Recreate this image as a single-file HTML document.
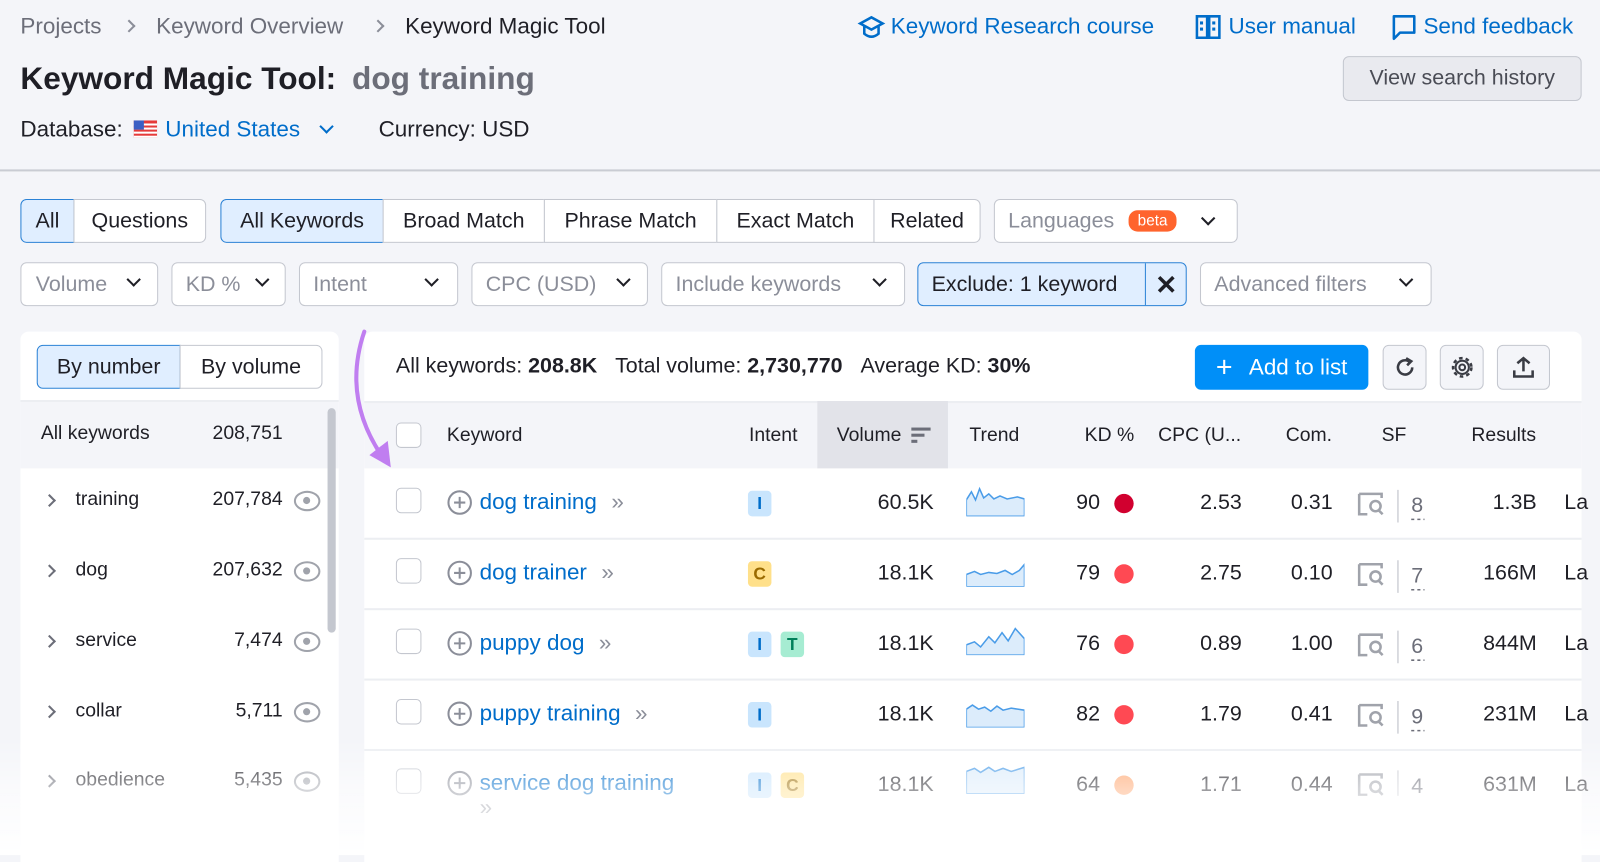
<!DOCTYPE html>
<html><head><meta charset="utf-8"><style>
*{box-sizing:border-box;margin:0;padding:0}
body{width:1600px;height:838px;overflow:hidden;background:#f4f5f9;font-family:"Liberation Sans",sans-serif;font-size:21px;color:#1f1f26;position:relative}
#w{position:absolute;left:0;top:0;width:1568px;height:822px;transform:scale(1.0204);transform-origin:0 0}
.a{position:absolute;white-space:nowrap}
.c{position:absolute;display:flex;align-items:center;justify-content:center;white-space:nowrap}
.gray{color:#6c6e79}
.blue{color:#006dca}
.btn{position:absolute;border:1px solid #c4c7cf;background:#fff;display:flex;align-items:center;white-space:nowrap}
.sel{background:#e0eeff;border-color:#2b82d6}
.chev{display:inline-block;width:10px;height:10px;border-right:2.5px solid #1f1f26;border-bottom:2.5px solid #1f1f26;transform:rotate(45deg);margin-top:-6px}
.rc{position:absolute;width:9px;height:9px;border-right:2px solid #8b8e99;border-top:2px solid #8b8e99;transform:rotate(45deg)}
.cb{position:absolute;width:25px;height:25px;border:1.5px solid #c4c7cf;border-radius:5px;background:#fff}
.tag{position:absolute;width:23px;height:25px;border-radius:4px;display:flex;align-items:center;justify-content:center;font-size:17px;font-weight:bold}
.tI{background:#c9e5fd;color:#006dca}
.tC{background:#ffe08a;color:#9a6a00}
.tT{background:#a6ecd2;color:#00805a}
.r{position:absolute;text-align:right;white-space:nowrap}
.dot{position:absolute;width:19px;height:19px;border-radius:50%}
.eye{position:absolute;width:26px;height:20px;border:2.5px solid #a0a3ab;border-radius:50%}
.eye:after{content:"";position:absolute;left:7px;top:4px;width:7px;height:7px;border-radius:50%;background:#a0a3ab}
</style></head><body><div id="w">
<!-- header -->
<div class="a gray" style="left:20px;top:13px;font-size:22px">Projects</div>
<div class="rc" style="left:122px;top:21px"></div>
<div class="a gray" style="left:153px;top:13px;font-size:22px">Keyword Overview</div>
<div class="rc" style="left:366px;top:21px"></div>
<div class="a" style="left:397px;top:13px;font-size:22px">Keyword Magic Tool</div>

<svg class="a" style="left:840px;top:14px" width="28" height="26" viewBox="0 0 28 26"><path d="M3 9 L14 3 L25 9 L14 15 Z" fill="none" stroke="#006dca" stroke-width="2.5"/><path d="M7 12 V19 Q14 25 21 19 V12" fill="none" stroke="#006dca" stroke-width="2.5"/></svg>
<div class="a blue" style="left:873px;top:13px;font-size:22px">Keyword Research course</div>
<svg class="a" style="left:1171px;top:13px" width="26" height="28" viewBox="0 0 26 28"><path d="M2 3 H12 V24 H2 Z M14 3 H24 V24 H14 Z" fill="none" stroke="#006dca" stroke-width="2.5"/><rect x="5" y="8" width="3" height="3" fill="#006dca"/><rect x="17" y="8" width="3" height="3" fill="#006dca"/><rect x="5" y="14" width="3" height="3" fill="#006dca"/><rect x="17" y="14" width="3" height="3" fill="#006dca"/></svg>
<div class="a blue" style="left:1204px;top:13px;font-size:22px">User manual</div>
<svg class="a" style="left:1363px;top:13px" width="26" height="28" viewBox="0 0 26 28"><path d="M3 3 H23 V19 H9 L3 25 Z" fill="none" stroke="#006dca" stroke-width="2.5" stroke-linejoin="round"/></svg>
<div class="a blue" style="left:1395px;top:13px;font-size:22px">Send feedback</div>

<div class="a" style="left:20px;top:59px;font-size:31px;font-weight:bold">Keyword Magic Tool:</div>
<div class="a" style="left:345px;top:59px;font-size:31px;font-weight:bold;color:#6c6e79">dog training</div>
<div class="c" style="left:1316px;top:55px;width:234px;height:44px;border:1.5px solid #c4c7cf;border-radius:6px;background:#e9eaef;color:#4a4c55;font-size:21px">View search history</div>

<div class="a" style="left:20px;top:114px;font-size:22px">Database:</div>
<svg class="a" style="left:131px;top:118px" width="23" height="17" viewBox="0 0 23 17"><rect width="23" height="17" fill="#e53a3a"/><rect y="3" width="23" height="2" fill="#fff"/><rect y="7" width="23" height="2" fill="#fff"/><rect y="11" width="23" height="2" fill="#fff"/><rect y="15" width="23" height="2" fill="#fff"/><rect width="10" height="9" fill="#3b5fc4"/></svg>
<div class="a blue" style="left:162px;top:114px;font-size:22px">United States</div>
<div class="a" style="left:315px;top:119px;width:10px;height:10px;border-right:2.5px solid #006dca;border-bottom:2.5px solid #006dca;transform:rotate(45deg)"></div>
<div class="a" style="left:371px;top:114px;font-size:22px">Currency: USD</div>

<div class="a" style="left:0;top:166px;width:1600px;height:2px;background:#c9ccd3"></div>

<!-- tabs -->
<div class="btn sel" style="left:20px;top:195px;width:53px;height:43px;border-radius:6px 0 0 6px;justify-content:center">All</div>
<div class="btn" style="left:72px;top:195px;width:130px;height:43px;border-radius:0 6px 6px 0;justify-content:center">Questions</div>
<div class="btn sel" style="left:216px;top:195px;width:160px;height:43px;border-radius:6px 0 0 6px;justify-content:center">All Keywords</div>
<div class="btn" style="left:375px;top:195px;width:159px;height:43px;justify-content:center">Broad Match</div>
<div class="btn" style="left:533px;top:195px;width:170px;height:43px;justify-content:center">Phrase Match</div>
<div class="btn" style="left:702px;top:195px;width:155px;height:43px;justify-content:center">Exact Match</div>
<div class="btn" style="left:856px;top:195px;width:105px;height:43px;border-radius:0 6px 6px 0;justify-content:center">Related</div>
<div class="btn" style="left:974px;top:195px;width:239px;height:43px;border-radius:6px;padding-left:13px;color:#8b8e99">Languages<span style="background:#ff642d;color:#fff;font-size:15px;border-radius:9px;padding:2px 9px;margin-left:14px">beta</span><span class="chev" style="margin-left:26px"></span></div>

<!-- filters -->
<div class="btn" style="left:20px;top:257px;width:135px;height:43px;border-radius:6px;padding-left:14px;color:#8b8e99">Volume<span class="chev" style="position:absolute;left:105px;top:17px"></span></div>
<div class="btn" style="left:168px;top:257px;width:112px;height:43px;border-radius:6px;padding-left:13px;color:#8b8e99">KD %<span class="chev" style="position:absolute;left:83px;top:17px"></span></div>
<div class="btn" style="left:293px;top:257px;width:156px;height:43px;border-radius:6px;padding-left:13px;color:#8b8e99">Intent<span class="chev" style="position:absolute;left:124px;top:17px"></span></div>
<div class="btn" style="left:462px;top:257px;width:173px;height:43px;border-radius:6px;padding-left:13px;color:#8b8e99">CPC (USD)<span class="chev" style="position:absolute;left:143px;top:17px"></span></div>
<div class="btn" style="left:648px;top:257px;width:239px;height:43px;border-radius:6px;padding-left:13px;color:#8b8e99">Include keywords<span class="chev" style="position:absolute;left:208px;top:17px"></span></div>
<div class="btn sel" style="left:899px;top:257px;width:264px;height:43px;border-radius:6px;padding-left:13px">Exclude: 1 keyword<div style="position:absolute;left:222px;top:0;width:1px;height:41px;background:#2b82d6"></div><span style="position:absolute;left:232px;top:6px;font-size:26px;font-weight:bold">✕</span></div>
<div class="btn" style="left:1176px;top:257px;width:227px;height:43px;border-radius:6px;padding-left:13px;color:#8b8e99">Advanced filters<span class="chev" style="position:absolute;left:196px;top:17px"></span></div>

<!-- left panel -->
<div class="a" style="left:20px;top:325px;width:312px;height:520px;background:#fff;border-radius:8px 8px 0 0"></div>
<div class="btn sel" style="left:36px;top:338px;width:141px;height:43px;border-radius:6px 0 0 6px;justify-content:center">By number</div>
<div class="btn" style="left:176px;top:338px;width:140px;height:43px;border-radius:0 6px 6px 0;justify-content:center">By volume</div>
<div class="a" style="left:20px;top:392px;width:312px;height:2px;background:#eceef2"></div>
<div class="a" style="left:20px;top:394px;width:312px;height:65px;background:#f4f5f9"></div>
<div class="a" style="left:321px;top:400px;width:8px;height:220px;border-radius:4px;background:#c4c7cf"></div>
<div class="a" style="left:40px;top:414px;font-size:19px">All keywords</div>
<div class="r" style="right:1291px;top:414px;font-size:19px">208,751</div>
<div class="rc" style="left:44px;top:486px;border-color:#6c6e79"></div><div class="a" style="left:74px;top:479px;font-size:19px">training</div><div class="r" style="right:1291px;top:479px;font-size:19px">207,784</div><div class="eye" style="left:288px;top:481px"></div>
<div class="rc" style="left:44px;top:555px;border-color:#6c6e79"></div><div class="a" style="left:74px;top:548px;font-size:19px">dog</div><div class="r" style="right:1291px;top:548px;font-size:19px">207,632</div><div class="eye" style="left:288px;top:550px"></div>
<div class="rc" style="left:44px;top:624px;border-color:#6c6e79"></div><div class="a" style="left:74px;top:617px;font-size:19px">service</div><div class="r" style="right:1291px;top:617px;font-size:19px">7,474</div><div class="eye" style="left:288px;top:619px"></div>
<div class="rc" style="left:44px;top:693px;border-color:#6c6e79"></div><div class="a" style="left:74px;top:686px;font-size:19px">collar</div><div class="r" style="right:1291px;top:686px;font-size:19px">5,711</div><div class="eye" style="left:288px;top:688px"></div>
<div class="rc" style="left:44px;top:761px;border-color:#6c6e79"></div><div class="a" style="left:74px;top:754px;font-size:19px">obedience</div><div class="r" style="right:1291px;top:754px;font-size:19px">5,435</div><div class="eye" style="left:288px;top:756px"></div>

<!-- main panel -->
<div class="a" style="left:357px;top:325px;width:1193px;height:520px;background:#fff;border-radius:8px 8px 0 0"></div>
<div class="a" style="left:388px;top:347px;font-size:21px">All keywords: <b>208.8K</b>&nbsp;&nbsp;&nbsp;Total volume: <b>2,730,770</b>&nbsp;&nbsp;&nbsp;Average KD: <b>30%</b></div>
<div class="c" style="left:1171px;top:338px;width:170px;height:44px;background:#008ff8;border-radius:6px;color:#fff;font-size:22px"><span style="font-size:28px;margin-right:16px">+</span>Add to list</div>
<div class="c" style="left:1355px;top:338px;width:43px;height:44px;border:1.5px solid #c4c7cf;border-radius:6px;background:#f4f5f9"><svg width="24" height="24" viewBox="0 0 24 24"><path d="M19 12 A7 7 0 1 1 16 6.3" fill="none" stroke="#3a3c44" stroke-width="2.5"/><path d="M13 3 L18 6 L14 10" fill="none" stroke="#3a3c44" stroke-width="2.5"/></svg></div>
<div class="c" style="left:1411px;top:338px;width:43px;height:44px;border:1.5px solid #c4c7cf;border-radius:6px;background:#f4f5f9"><svg width="26" height="26" viewBox="0 0 26 26"><circle cx="13" cy="13" r="9" fill="none" stroke="#3a3c44" stroke-width="2.5" stroke-dasharray="3.5 3"/><circle cx="13" cy="13" r="6.5" fill="none" stroke="#3a3c44" stroke-width="2"/><circle cx="13" cy="13" r="2.8" fill="none" stroke="#3a3c44" stroke-width="2"/></svg></div>
<div class="c" style="left:1467px;top:338px;width:52px;height:44px;border:1.5px solid #c4c7cf;border-radius:6px;background:#f4f5f9"><svg width="24" height="24" viewBox="0 0 24 24"><path d="M12 16 V3 M6 8 L12 3 L18 8 M3 15 V21 H21 V15" fill="none" stroke="#3a3c44" stroke-width="2.5"/></svg></div>

<div class="a" style="left:357px;top:393px;width:1193px;height:66px;background:#f4f5f9;border-top:2px solid #eceef2"></div>
<div class="a" style="left:801px;top:393px;width:128px;height:66px;background:#e2e3e9"></div>
<div class="cb" style="left:388px;top:414px"></div>
<div class="a" style="left:438px;top:416px;font-size:19px">Keyword</div>
<div class="a" style="left:734px;top:416px;font-size:19px">Intent</div>
<div class="a" style="left:820px;top:416px;font-size:19px">Volume</div>
<svg class="a" style="left:893px;top:418px" width="20" height="18"><rect x="0" y="1" width="19" height="3" fill="#6c6e79"/><rect x="0" y="7" width="13" height="3" fill="#6c6e79"/><rect x="0" y="13" width="6" height="3" fill="#6c6e79"/></svg>
<div class="a" style="left:950px;top:416px;font-size:19px">Trend</div>
<div class="a" style="left:1063px;top:416px;font-size:19px">KD %</div>
<div class="a" style="left:1135px;top:416px;font-size:19px">CPC (U...</div>
<div class="a" style="left:1260px;top:416px;font-size:19px">Com.</div>
<div class="a" style="left:1354px;top:416px;font-size:19px">SF</div>
<div class="a" style="left:1442px;top:416px;font-size:19px">Results</div>

<div class="a" style="left:357px;top:527px;width:1193px;height:2px;background:#eceef2"></div>
<div class="a" style="left:357px;top:596px;width:1193px;height:2px;background:#eceef2"></div>
<div class="a" style="left:357px;top:665px;width:1193px;height:2px;background:#eceef2"></div>
<div class="a" style="left:357px;top:734px;width:1193px;height:2px;background:#eceef2"></div>

<!-- row 1 -->
<div class="cb" style="left:388px;top:478px"></div>
<svg class="a" style="left:438px;top:480px" width="25" height="25"><circle cx="12.5" cy="12.5" r="11" fill="none" stroke="#8b8e99" stroke-width="2"/><path d="M12.5 7 V18 M7 12.5 H18" stroke="#8b8e99" stroke-width="2"/></svg>
<div class="a blue" style="left:470px;top:479px;font-size:22px">dog training <span style="color:#8b8e99;margin-left:8px">»</span></div>
<div class="tag tI" style="left:733px;top:481px">I</div>
<div class="r" style="right:653px;top:481px;font-size:21px">60.5K</div>
<svg class="a" style="left:947px;top:476px" width="57" height="30"><path d="M0 14 L5 6 L9 14 L13 3 L17 12 L22 8 L27 13 L33 10 L40 13 L50 11 L57 13 V30 H0Z" fill="#dcecfb" stroke="#4a9ce8" stroke-width="1.5"/></svg>
<div class="r" style="right:490px;top:481px;font-size:21px">90</div><div class="dot" style="left:1092px;top:484px;background:#d1002f"></div>
<div class="r" style="right:351px;top:481px;font-size:21px">2.53</div>
<div class="r" style="right:262px;top:481px;font-size:21px">0.31</div>
<div class="r" style="right:62px;top:481px;font-size:21px">1.3B</div>
<div class="a" style="left:1533px;top:481px;font-size:21px">La</div>

<!-- row 2 -->
<div class="cb" style="left:388px;top:547px"></div>
<svg class="a" style="left:438px;top:549px" width="25" height="25"><circle cx="12.5" cy="12.5" r="11" fill="none" stroke="#8b8e99" stroke-width="2"/><path d="M12.5 7 V18 M7 12.5 H18" stroke="#8b8e99" stroke-width="2"/></svg>
<div class="a blue" style="left:470px;top:548px;font-size:22px">dog trainer <span style="color:#8b8e99;margin-left:8px">»</span></div>
<div class="tag tC" style="left:733px;top:550px">C</div>
<div class="r" style="right:653px;top:550px;font-size:21px">18.1K</div>
<svg class="a" style="left:947px;top:545px" width="57" height="30"><path d="M0 18 L8 15 L14 18 L22 16 L30 17 L38 14 L45 18 L52 14 L57 8 V30 H0Z" fill="#dcecfb" stroke="#4a9ce8" stroke-width="1.5"/></svg>
<div class="r" style="right:490px;top:550px;font-size:21px">79</div><div class="dot" style="left:1092px;top:553px;background:#ff4953"></div>
<div class="r" style="right:351px;top:550px;font-size:21px">2.75</div>
<div class="r" style="right:262px;top:550px;font-size:21px">0.10</div>
<div class="r" style="right:62px;top:550px;font-size:21px">166M</div>
<div class="a" style="left:1533px;top:550px;font-size:21px">La</div>

<!-- row 3 -->
<div class="cb" style="left:388px;top:616px"></div>
<svg class="a" style="left:438px;top:618px" width="25" height="25"><circle cx="12.5" cy="12.5" r="11" fill="none" stroke="#8b8e99" stroke-width="2"/><path d="M12.5 7 V18 M7 12.5 H18" stroke="#8b8e99" stroke-width="2"/></svg>
<div class="a blue" style="left:470px;top:617px;font-size:22px">puppy dog <span style="color:#8b8e99;margin-left:8px">»</span></div>
<div class="tag tI" style="left:733px;top:619px">I</div><div class="tag tT" style="left:765px;top:619px">T</div>
<div class="r" style="right:653px;top:619px;font-size:21px">18.1K</div>
<svg class="a" style="left:947px;top:612px" width="57" height="30"><path d="M0 20 L8 17 L14 22 L22 12 L28 18 L35 8 L41 16 L48 4 L57 14 V30 H0Z" fill="#dcecfb" stroke="#4a9ce8" stroke-width="1.5"/></svg>
<div class="r" style="right:490px;top:619px;font-size:21px">76</div><div class="dot" style="left:1092px;top:622px;background:#ff4953"></div>
<div class="r" style="right:351px;top:619px;font-size:21px">0.89</div>
<div class="r" style="right:262px;top:619px;font-size:21px">1.00</div>
<div class="r" style="right:62px;top:619px;font-size:21px">844M</div>
<div class="a" style="left:1533px;top:619px;font-size:21px">La</div>

<!-- row 4 -->
<div class="cb" style="left:388px;top:685px"></div>
<svg class="a" style="left:438px;top:687px" width="25" height="25"><circle cx="12.5" cy="12.5" r="11" fill="none" stroke="#8b8e99" stroke-width="2"/><path d="M12.5 7 V18 M7 12.5 H18" stroke="#8b8e99" stroke-width="2"/></svg>
<div class="a blue" style="left:470px;top:686px;font-size:22px">puppy training <span style="color:#8b8e99;margin-left:8px">»</span></div>
<div class="tag tI" style="left:733px;top:688px">I</div>
<div class="r" style="right:653px;top:688px;font-size:21px">18.1K</div>
<svg class="a" style="left:947px;top:683px" width="57" height="30"><path d="M0 12 L6 8 L12 12 L18 10 L24 14 L30 9 L36 13 L44 11 L57 13 V30 H0Z" fill="#dcecfb" stroke="#4a9ce8" stroke-width="1.5"/></svg>
<div class="r" style="right:490px;top:688px;font-size:21px">82</div><div class="dot" style="left:1092px;top:691px;background:#ff4953"></div>
<div class="r" style="right:351px;top:688px;font-size:21px">1.79</div>
<div class="r" style="right:262px;top:688px;font-size:21px">0.41</div>
<div class="r" style="right:62px;top:688px;font-size:21px">231M</div>
<div class="a" style="left:1533px;top:688px;font-size:21px">La</div>

<!-- row 5 -->
<div class="cb" style="left:388px;top:753px"></div>
<svg class="a" style="left:438px;top:755px" width="25" height="25"><circle cx="12.5" cy="12.5" r="11" fill="none" stroke="#8b8e99" stroke-width="2"/><path d="M12.5 7 V18 M7 12.5 H18" stroke="#8b8e99" stroke-width="2"/></svg>
<div class="a blue" style="left:470px;top:754px;font-size:22px">service dog training</div>
<div class="a" style="left:470px;top:778px;font-size:22px;color:#8b8e99">»</div>
<div class="tag tI" style="left:733px;top:757px">I</div><div class="tag tC" style="left:765px;top:757px">C</div>
<div class="r" style="right:653px;top:757px;font-size:21px">18.1K</div>
<svg class="a" style="left:947px;top:748px" width="57" height="30"><path d="M0 8 L8 5 L14 9 L22 4 L28 8 L36 5 L44 8 L57 4 V30 H0Z" fill="#dcecfb" stroke="#4a9ce8" stroke-width="1.5"/></svg>
<div class="r" style="right:490px;top:757px;font-size:21px">64</div><div class="dot" style="left:1092px;top:760px;background:#ffa36b"></div>
<div class="r" style="right:351px;top:757px;font-size:21px">1.71</div>
<div class="r" style="right:262px;top:757px;font-size:21px">0.44</div>
<div class="r" style="right:62px;top:757px;font-size:21px">631M</div>
<div class="a" style="left:1533px;top:757px;font-size:21px">La</div>

<!-- SF column -->
<svg class="a" style="left:1330px;top:480px" width="75" height="300">
<g fill="none" stroke="#a0a3ab" stroke-width="2.5">
<path d="M2 4 H24 V8 M2 4 V24 H10"/><circle cx="18" cy="16" r="5"/><path d="M21 20 L25 24"/>
<path transform="translate(0,69)" d="M2 4 H24 V8 M2 4 V24 H10"/><circle cx="18" cy="85" r="5"/><path d="M21 89 L25 93"/>
<path transform="translate(0,138)" d="M2 4 H24 V8 M2 4 V24 H10"/><circle cx="18" cy="154" r="5"/><path d="M21 158 L25 162"/>
<path transform="translate(0,207)" d="M2 4 H24 V8 M2 4 V24 H10"/><circle cx="18" cy="223" r="5"/><path d="M21 227 L25 231"/>
<path transform="translate(0,275)" d="M2 4 H24 V8 M2 4 V24 H10"/><circle cx="18" cy="291" r="5"/><path d="M21 295 L25 299"/>
</g>
<g stroke="#d0d2d8" stroke-width="1.5"><path d="M40 0 V32 M40 69 V101 M40 138 V170 M40 207 V239 M40 275 V300"/></g>
<g font-family="Liberation Sans" font-size="21" fill="#6c6e79"><text x="53" y="22">8</text><text x="53" y="91">7</text><text x="53" y="160">6</text><text x="53" y="229">9</text><text x="53" y="297">4</text></g>
<g stroke="#6c6e79" stroke-width="1.5" stroke-dasharray="3 3"><path d="M53 29 H66 M53 98 H66 M53 167 H66 M53 236 H66"/></g>
</svg>

<!-- purple arrow -->
<svg class="a" style="left:335px;top:320px" width="60" height="145"><path d="M22 5 Q0 70 40 128" fill="none" stroke="#c07ef0" stroke-width="4" stroke-linecap="round"/><path d="M27 126 L48 138 L45 112 Z" fill="#c07ef0"/></svg>

<!-- bottom fade -->
<div class="a" style="left:0;top:720px;width:1600px;height:118px;background:linear-gradient(to bottom,rgba(255,255,255,0) 0%,rgba(255,255,255,0.55) 45%,rgba(255,255,255,0.95) 100%)"></div>
</div></body></html>
